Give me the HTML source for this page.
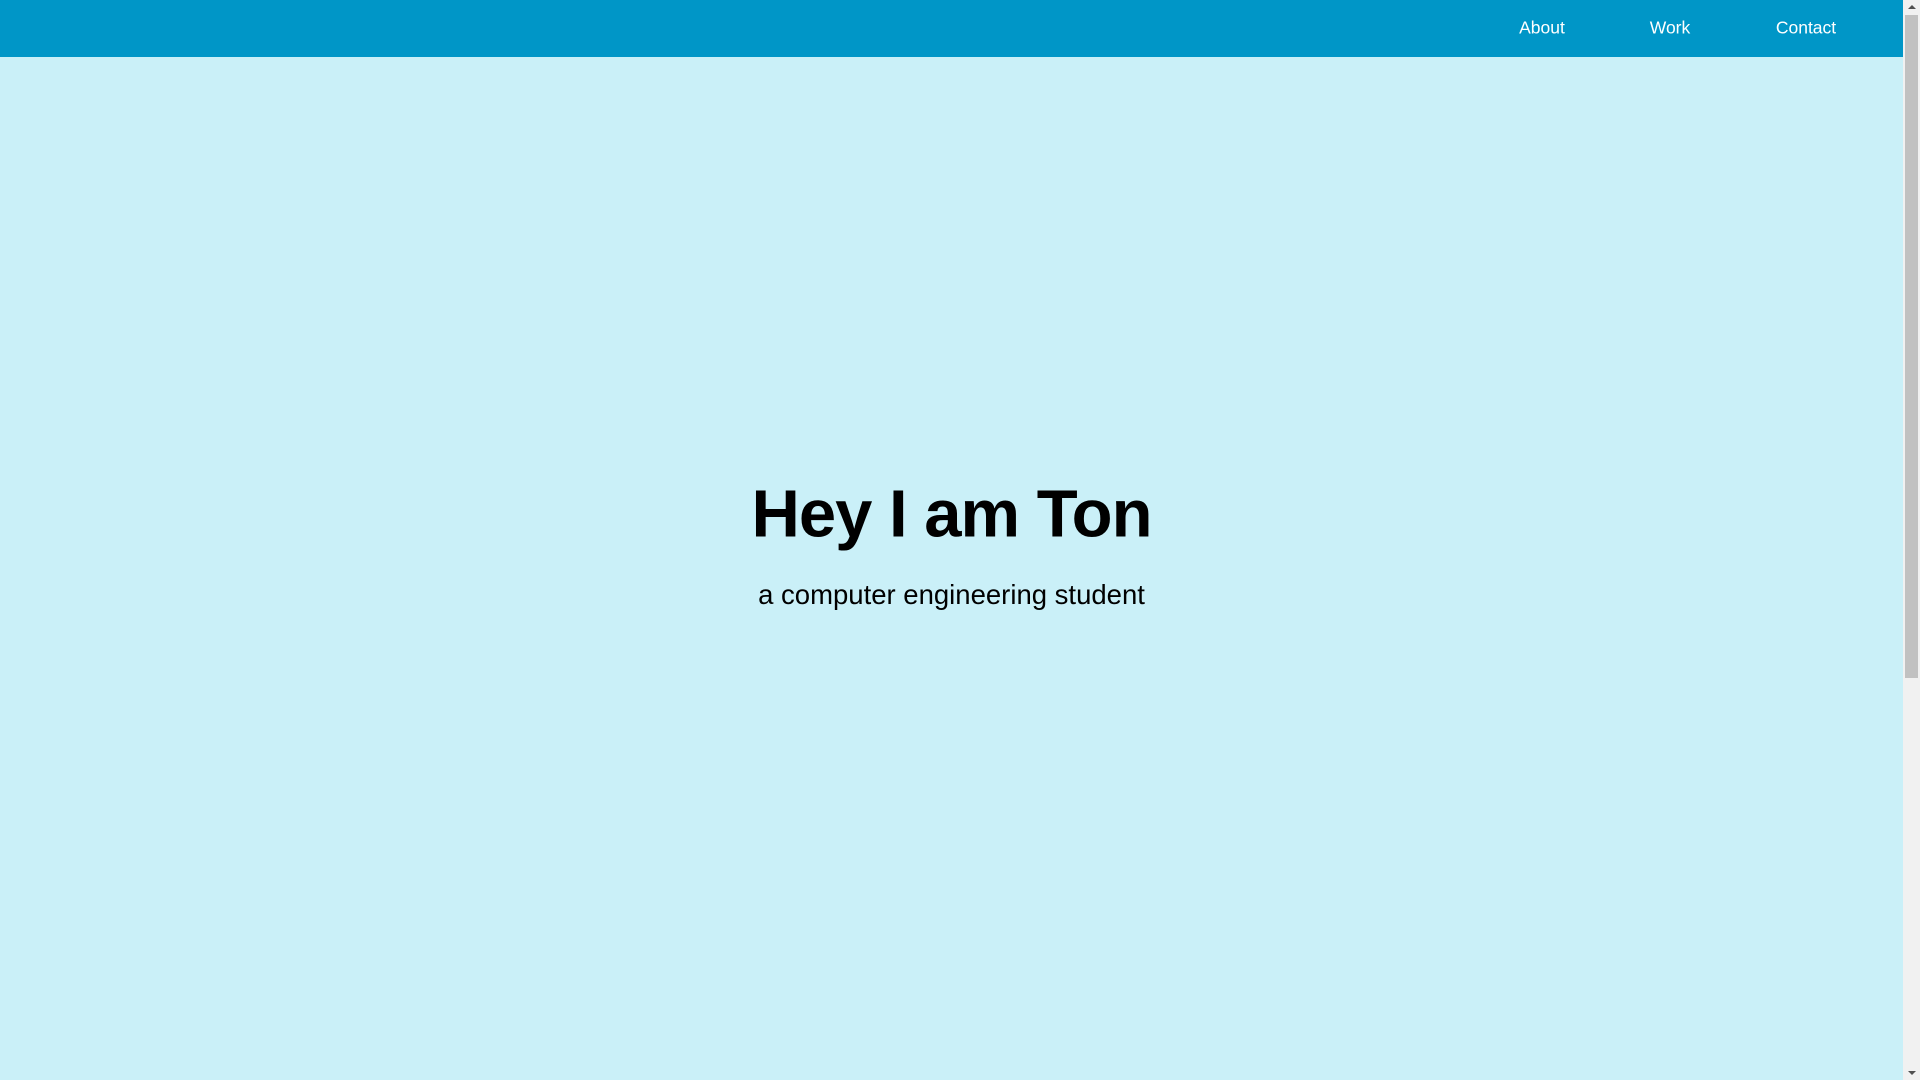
<!DOCTYPE html>
<html><head><meta charset="utf-8"><style>
html,body{margin:0;padding:0;width:1920px;height:1080px;overflow:hidden;background:#CAF0F8;font-family:"Liberation Sans",sans-serif}
nav{position:absolute;left:0;top:0;width:1903px;height:57px;background:#0096C7}
nav a{position:absolute;top:28px;transform:translate(-50%,-50%);color:#fff;font-size:17.5px;text-decoration:none;white-space:nowrap}
h1{position:absolute;left:0;width:1903px;top:514px;transform:translateY(-50%);margin:0;text-align:center;font-size:67px;font-weight:700;color:#000;letter-spacing:-1px}
p{position:absolute;left:0;width:1903px;top:595px;transform:translateY(-50%);margin:0;text-align:center;font-size:27.5px;color:#000}
.sb{position:absolute;right:0;top:0;width:17px;height:1080px;background:#f1f1f1}
.th{position:absolute;right:2px;top:15px;width:13px;height:663px;background:#c1c1c1}
.ar{position:absolute;right:4px;width:0;height:0;border-left:4px solid transparent;border-right:4px solid transparent}
</style></head><body>
<nav><a style="left:1542px">About</a><a style="left:1670px">Work</a><a style="left:1806px">Contact</a></nav>
<h1>Hey I am Ton</h1>
<p>a computer engineering student</p>
<div class="sb"><div class="th"></div><div class="ar" style="top:5px;border-bottom:4px solid #505050"></div><div class="ar" style="bottom:5px;border-top:4px solid #505050"></div></div>
</body></html>
